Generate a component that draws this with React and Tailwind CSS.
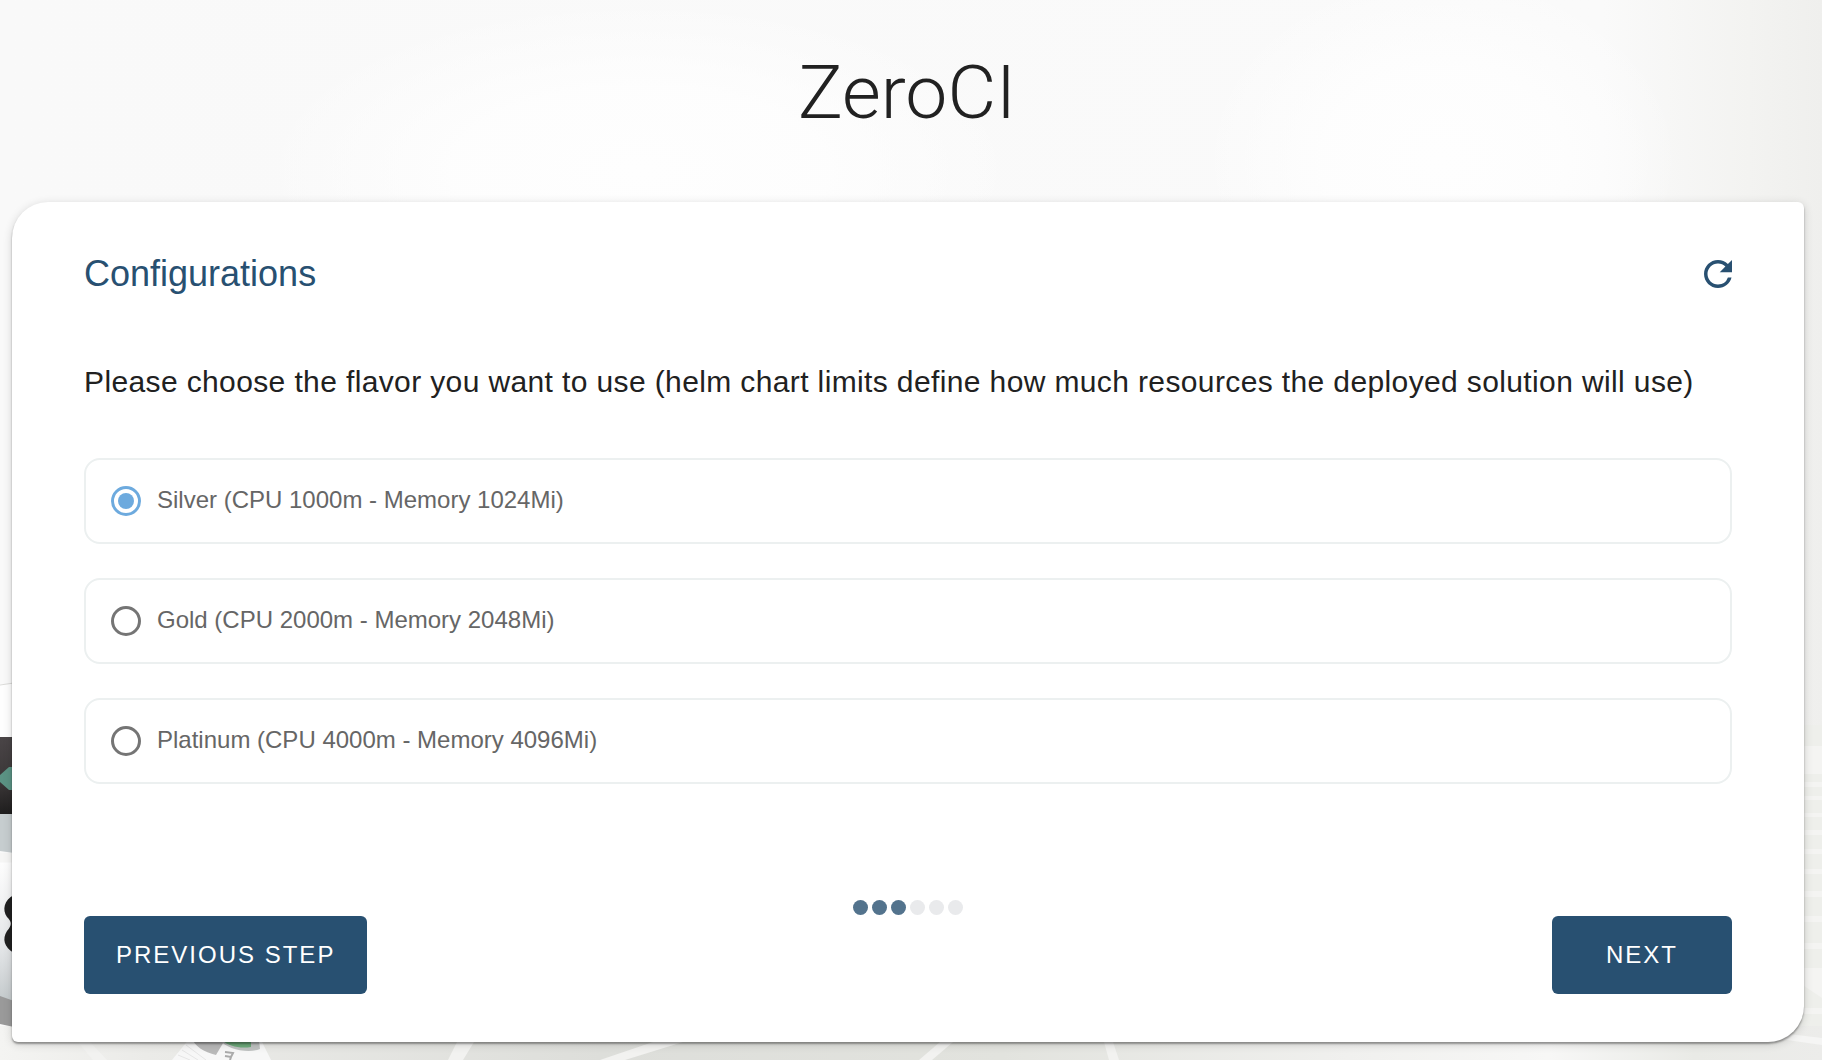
import { useState } from "react";

const flavors = [
  { id: "silver", label: "Silver (CPU 1000m - Memory 1024Mi)" },
  { id: "gold", label: "Gold (CPU 2000m - Memory 2048Mi)" },
  { id: "platinum", label: "Platinum (CPU 4000m - Memory 4096Mi)" },
];

function Backdrop() {
  return (
    <svg
      aria-hidden="true"
      className="absolute inset-0 size-full"
      viewBox="0 0 1822 1060"
      preserveAspectRatio="none"
    >
      <defs>
        <linearGradient id="wall" x1="0" x2="1" y1="0" y2="0">
          <stop offset="0" stopColor="#f9f9f9" />
          <stop offset="0.88" stopColor="#fafafa" />
          <stop offset="0.96" stopColor="#f3f3f1" />
          <stop offset="1" stopColor="#efefed" />
        </linearGradient>
        <radialGradient id="glow">
          <stop offset="0" stopColor="#fefefe" />
          <stop offset="0.5" stopColor="#fefefe" stopOpacity="0.8" />
          <stop offset="1" stopColor="#fefefe" stopOpacity="0" />
        </radialGradient>
        <linearGradient id="floor" x1="0" x2="1" y1="0" y2="0">
          <stop offset="0" stopColor="#f4f4f2" />
          <stop offset="0.08" stopColor="#ebebe8" />
          <stop offset="0.33" stopColor="#dddeda" />
          <stop offset="0.55" stopColor="#e2e3de" />
          <stop offset="0.74" stopColor="#f0f0ee" />
          <stop offset="0.85" stopColor="#f7f7f6" />
          <stop offset="0.93" stopColor="#e9eae6" />
          <stop offset="1" stopColor="#ececea" />
        </linearGradient>
        <linearGradient id="metal" x1="0" x2="0" y1="0" y2="1">
          <stop offset="0" stopColor="#4a4547" />
          <stop offset="0.6" stopColor="#3a3637" />
          <stop offset="1" stopColor="#1f1e1e" />
        </linearGradient>
        <linearGradient id="shell" x1="0" x2="0" y1="0" y2="1">
          <stop offset="0" stopColor="#fdfdfd" />
          <stop offset="0.6" stopColor="#e4e6e8" />
          <stop offset="1" stopColor="#c3c9cb" />
        </linearGradient>
      </defs>
      <rect width="1822" height="1060" fill="url(#wall)" />
      <ellipse cx="1440" cy="160" rx="240" ry="190" fill="url(#glow)" />
      <ellipse cx="640" cy="170" rx="380" ry="170" fill="url(#glow)" />
      <rect x="1780" y="725" width="42" height="335" fill="#eeefeb" />
      <path
        d="M1780 746h42v28h-42zM1780 782h42v5h-42zM1780 796h42v4h-42zM1780 813h42v4h-42zM1780 830h42v5h-42zM1780 849h42v5h-42zM1780 869h42v5h-42zM1780 891h42v6h-42zM1780 916h42v6h-42zM1780 943h42v6h-42zM1780 968h42v30l-42-28zM1780 1008h42v6h-42z"
        fill="#f4f4f2"
      />
      <rect y="1026" width="1822" height="34" fill="url(#floor)" />
      <path d="M78 1042h12l17 18H93zM457 1042h17l-11 18h-15zM653 1042h30l-58 18h-25zM940 1042h13l-21 18h-13zM1104 1042h9l6 18h-10z" fill="#f2f2f0" />
      <path d="M1780 1033l42 5v7l-42-6z" fill="#f5f5f4" />
      <rect y="684" width="14" height="54" fill="#fefefe" />
      <path d="M0 685l14-2" stroke="#dcdcda" />
      <rect y="737" width="14" height="77" fill="url(#metal)" />
      <path d="M0 775l9-8h5v23H9l-9-8z" fill="#5b9384" />
      <path d="M0 814h14v39L0 851z" fill="#c6cdcf" />
      <path d="M0 853h14v9H0z" fill="#f6f6f5" />
      <path d="M0 863h14v140H0z" fill="url(#shell)" />
      <path d="M14 895C4 900 2 910 7 917c5 5 5 8 0 14-5 8-3 16 7 22z" fill="#202020" />
      <path d="M0 996l14 5v26L0 1024z" fill="#9a9a9a" />
      <path d="M190 1038l-18 22h99l-11-22z" fill="#f7f7f7" />
      <path d="M192 1038c2 8 12 14 24 17l10-17z" fill="#b9b9b9" />
      <path d="M220 1040c6 9 28 14 40 9l-1-9z" fill="#bfc2c1" />
      <path d="M222 1040c6 6 18 9 29 7v-7z" fill="#6eab7b" />
      <path d="M225 1052l8 1-2 4-6-1M231 1057l-1 3" stroke="#aaa" strokeWidth="2" fill="none" />
      <path d="M178 1055l12 5M182 1050l16 10M186 1045l20 15" stroke="#e5e5e5" />
    </svg>
  );
}

export default function App() {
  const [flavor, setFlavor] = useState("silver");

  return (
    <div className="relative flex min-h-screen flex-col overflow-hidden pb-[18px] font-['Liberation_Sans',Arial,sans-serif] text-[#212121]">
      <Backdrop />
      <header className="relative pt-[50px] pr-2 pb-17 text-center">
        <h1 className="font-['Roboto',sans-serif] text-[75px] leading-[84px] font-light">ZeroCI</h1>
      </header>

      <main className="relative mr-[18px] ml-3 flex grow flex-col rounded-tl-[36px] rounded-tr-md rounded-br-[36px] rounded-bl-md bg-white px-18 pt-12 pb-12 shadow-[0_2px_2px_rgba(0,0,0,0.35),0_2px_10px_rgba(0,0,0,0.16)]">
        <div className="flex items-center justify-between">
          <h2 className="text-4xl leading-12 text-[#285071]">Configurations</h2>
          <button type="button" aria-label="Refresh" className="text-[#285071]">
            <svg viewBox="4 4 16 16" className="size-7" fill="currentColor">
              <path d="M17.65 6.35A7.958 7.958 0 0 0 12 4c-4.42 0-7.99 3.58-7.99 8s3.57 8 7.99 8c3.73 0 6.84-2.55 7.73-6h-2.08A5.99 5.99 0 0 1 12 18c-3.31 0-6-2.69-6-6s2.69-6 6-6c1.66 0 3.14.69 4.22 1.78L13 11h7V4l-2.35 2.35z" />
            </svg>
          </button>
        </div>

        <fieldset className="mt-15">
          <legend className="text-3xl leading-12 tracking-[0.0125em]">
            Please choose the flavor you want to use (helm chart limits define how much resources the deployed solution will use)
          </legend>
          <div className="mt-13 flex flex-col gap-[34px]">
            {flavors.map(({ id, label }) => (
              <label
                key={id}
                className="flex h-[86px] cursor-pointer items-center gap-4 rounded-2xl border-2 border-[#ecf0f0] px-[25px] text-2xl text-[#666]"
              >
                <input
                  type="radio"
                  name="flavor"
                  value={id}
                  checked={flavor === id}
                  onChange={() => setFlavor(id)}
                  className="grid size-[30px] shrink-0 appearance-none place-items-center rounded-full border-3 border-[#757575] before:size-4 before:rounded-full before:content-[''] checked:border-[#6daade] checked:before:bg-[#6daade]"
                />
                <span className="pb-0.5">{label}</span>
              </label>
            ))}
          </div>
        </fieldset>

        <div className="mt-auto flex justify-center gap-1 pb-px">
          {[1, 2, 3, 4, 5, 6].map((step) => (
            <span
              key={step}
              className={step <= 3 ? "size-[15px] rounded-full bg-[#53738d]" : "size-[15px] rounded-full bg-[#e9eaec]"}
            />
          ))}
        </div>
        <div className="flex justify-between">
          <button type="button" className="h-[78px] rounded-md bg-[#285071] px-8 text-2xl tracking-[2px] text-white">
            PREVIOUS STEP
          </button>
          <button type="button" className="h-[78px] w-45 rounded-md bg-[#285071] text-2xl tracking-[2px] text-white">
            NEXT
          </button>
        </div>
      </main>
    </div>
  );
}
